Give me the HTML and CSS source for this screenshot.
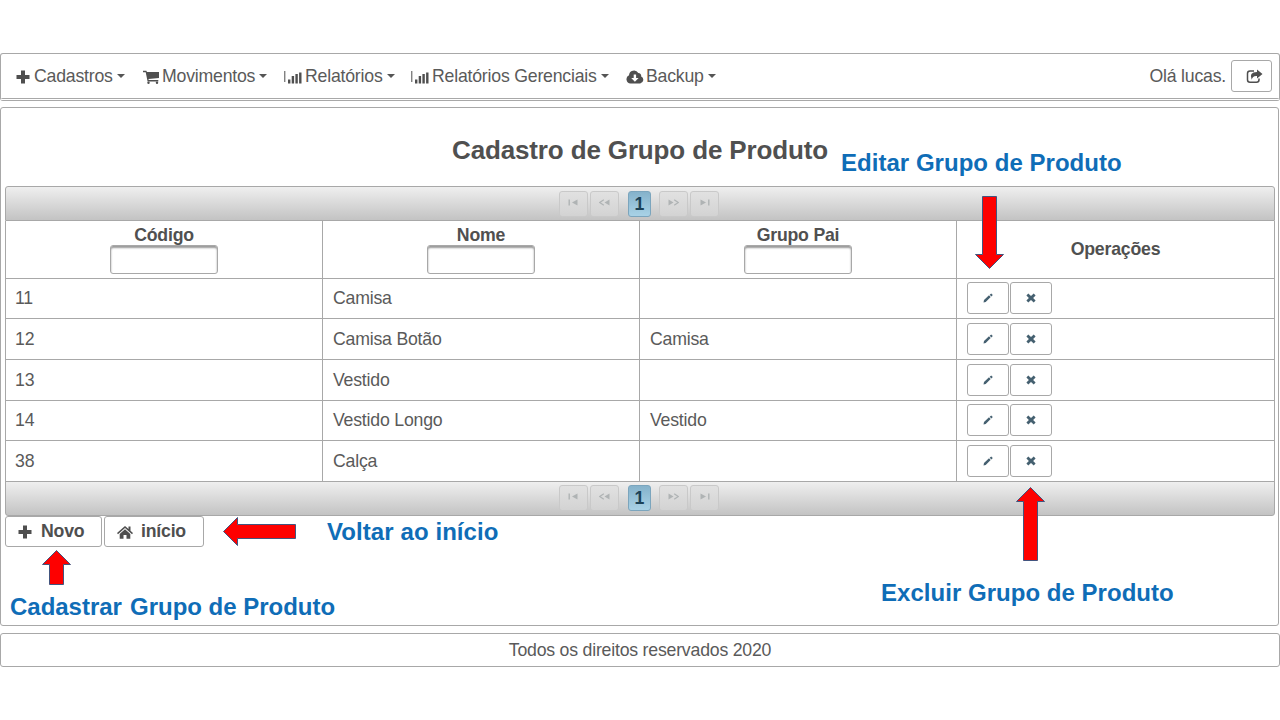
FILE: index.html
```html
<!DOCTYPE html>
<html lang="pt-BR">
<head>
<meta charset="utf-8">
<title>Cadastro de Grupo de Produto</title>
<link rel="stylesheet" href="styles.css">
</head>
<body>
<svg class="defs" width="0" height="0">
  <symbol id="plus" viewBox="0 0 14 14"><path d="M5 .5h4V5h4.500v4H9v4.500H5V9H.5V5H5z"/></symbol>
  <symbol id="cart" viewBox="0 0 16 14"><path d="M0 .7h3.400l.5 1.300H16v6l-10.500 1 .2 1H15.300V11.500H4.600L2.700 2.300H0z"/><circle cx="5.500" cy="12.700" r="1.200"/><circle cx="14" cy="12.700" r="1.200"/></symbol>
  <symbol id="chart" viewBox="0 0 18 14"><path d="M.3 1h1v11h-1zM4 9.500h2.400v4H4zM7.700 6h2.400v7.500H7.700zM11.400 7.500h2.400v6h-2.400zM11.400 4h2.400v9.500h-2.400zM15.100 2.500h2.400v11h-2.400z"/></symbol>
  <symbol id="cloud" viewBox="0 0 18 14"><path fill-rule="evenodd" d="M4.500 13.500A4.300 4.300 0 0 1 3 5.300 5 5 0 0 1 12.300 3a3 3 0 0 1 2.900 3.500 3.700 3.700 0 0 1-1 7zM7.700 4.500V8H5.200l3.700 3.800L12.600 8h-2.500V4.500z"/></symbol>
  <symbol id="share" viewBox="0 0 17 15"><path d="M8 2H4Q1.500 2 1.500 4.500v6.300q0 2.500 2.500 2.500h6.500q2.500 0 2.500-2.500V9.500" fill="none" stroke="currentColor" stroke-width="1.500"/><path d="M11 .5 16.500 5 11 9.500V7Q6.500 6.500 5.700 10.800 2.500 3 11 3z"/></symbol>
  <symbol id="home" viewBox="0 0 16 14"><path d="M8 1 0 8l1 1.200 7-6.100 7 6.100L16 8l-2.500-2.200V1.500h-2v2.500z"/><path d="M8 4.300 2.700 9v4.700H6.500V10h3v3.700h3.800V9z"/></symbol>
  <symbol id="pencil" viewBox="0 0 10 10"><path d="M.5 9.500 1 7l5-4.700L7.700 4l-5 5zM6.700 1.700 8.200.4 9.800 2 8.400 3.400z"/></symbol>
  <symbol id="cross" viewBox="0 0 10 10"><path d="M2.300.5 5 3 7.700.5 9.600 2.400 7.100 5l2.500 2.600-1.900 1.900L5 7 2.300 9.500.4 7.600 2.900 5 .4 2.400z"/></symbol>
  <symbol id="first" viewBox="0 0 10 7"><path d="M0 .5h1.400v6H0zM9 .5v6L3.500 3.500z"/></symbol>
  <symbol id="prev" viewBox="0 0 11 7"><path d="M4.800.8.8 3.500l4 2.700" fill="none" stroke="currentColor" stroke-width="1.200"/><path d="M10.500.5v6L5.500 3.500z"/></symbol>
  <symbol id="next" viewBox="0 0 11 7"><path d="m6.200.8 4 2.700-4 2.700" fill="none" stroke="currentColor" stroke-width="1.200"/><path d="M.5.500v6l5-3z"/></symbol>
  <symbol id="last" viewBox="0 0 10 7"><path d="M8.600.5H10v6H8.600zM1 .5v6l5.500-3z"/></symbol>
</svg>

<nav class="menubar">
  <div class="menu">
    <span class="item cadastros"><svg class="ico plus"><use href="#plus"/></svg>Cadastros<i class="caret"></i></span>
    <span class="item movimentos"><svg class="ico cart"><use href="#cart"/></svg>Movimentos<i class="caret"></i></span>
    <span class="item relatorios"><svg class="ico chart"><use href="#chart"/></svg>Relatórios<i class="caret"></i></span>
    <span class="item gerenciais"><svg class="ico chart"><use href="#chart"/></svg>Relatórios Gerenciais<i class="caret"></i></span>
    <span class="item backup"><svg class="ico cloud"><use href="#cloud"/></svg>Backup<i class="caret"></i></span>
  </div>
  <div class="user">Olá lucas.<button class="btn logout" aria-label="Sair"><svg><use href="#share"/></svg></button></div>
</nav>

<main class="panel">
  <h1>Cadastro de Grupo de Produto</h1>
  <div class="pager top">
    <span class="pg"><svg><use href="#first"/></svg></span><span class="pg"><svg><use href="#prev"/></svg></span><b class="current">1</b><span class="pg"><svg><use href="#next"/></svg></span><span class="pg"><svg><use href="#last"/></svg></span>
  </div>
  <table>
    <colgroup><col class="c1"><col class="c2"><col class="c3"><col class="c4"></colgroup>
    <thead><tr>
      <th>Código<input type="text" aria-label="Código"></th>
      <th>Nome<input type="text" aria-label="Nome"></th>
      <th>Grupo Pai<input type="text" aria-label="Grupo Pai"></th>
      <th>Operações</th>
    </tr></thead>
    <tbody>
      <tr><td>11</td><td>Camisa</td><td></td><td><div class="ops"><button class="btn"><svg><use href="#pencil"/></svg></button><button class="btn"><svg><use href="#cross"/></svg></button></div></td></tr>
      <tr class="tall"><td>12</td><td>Camisa Botão</td><td>Camisa</td><td><div class="ops"><button class="btn"><svg><use href="#pencil"/></svg></button><button class="btn"><svg><use href="#cross"/></svg></button></div></td></tr>
      <tr class="tall"><td>13</td><td>Vestido</td><td></td><td><div class="ops"><button class="btn"><svg><use href="#pencil"/></svg></button><button class="btn"><svg><use href="#cross"/></svg></button></div></td></tr>
      <tr><td>14</td><td>Vestido Longo</td><td>Vestido</td><td><div class="ops"><button class="btn"><svg><use href="#pencil"/></svg></button><button class="btn"><svg><use href="#cross"/></svg></button></div></td></tr>
      <tr class="tall"><td>38</td><td>Calça</td><td></td><td><div class="ops"><button class="btn"><svg><use href="#pencil"/></svg></button><button class="btn"><svg><use href="#cross"/></svg></button></div></td></tr>
    </tbody>
  </table>
  <div class="pager bottom">
    <span class="pg"><svg><use href="#first"/></svg></span><span class="pg"><svg><use href="#prev"/></svg></span><b class="current">1</b><span class="pg"><svg><use href="#next"/></svg></span><span class="pg"><svg><use href="#last"/></svg></span>
  </div>
  <div class="actions">
    <button class="btn novo"><svg class="ico plus"><use href="#plus"/></svg>Novo</button>
    <button class="btn inicio"><svg class="ico home"><use href="#home"/></svg>início</button>
  </div>
</main>

<footer>Todos os direitos reservados 2020</footer>

<div class="note edit">Editar Grupo de Produto</div>
<div class="note back">Voltar ao início</div>
<div class="note create">Cadastrar<span class="gap"> </span>Grupo de Produto</div>
<div class="note remove">Excluir Grupo de Produto</div>
<svg class="arrows" viewBox="0 0 1280 720">
  <path d="M982.500 196.500h14v58h7L989.500 268.500 975.500 254.500h7z"/>
  <path d="M1023.500 560.500h14v-59h7L1030.500 487.500 1016.500 501.500h7z"/>
  <path d="M295.500 524.500v14h-58v7L223.500 531.500 237.500 517.500v7z"/>
  <path d="M49.500 584.500h14v-20h7L56.500 550.500 42.500 564.500h7z"/>
</svg>
</body>
</html>
```
FILE: styles.css
```css
* { box-sizing: border-box; }
body {
  margin: 0;
  padding-top: 53px;
  width: 1280px;
  height: 720px;
  overflow: hidden;
  position: relative;
  background: #fff;
  color: #5a5a5a;
  font: 17.7px/20px "Liberation Sans", Arial, sans-serif;
  letter-spacing: -0.21px;
}
svg { fill: currentColor; display: block; flex: none; }
.defs { position: absolute; }
.menubar {
  height: 48px;
  border: 1px solid #a8a8a8;
  border-bottom: 3px double #a8a8a8;
  border-radius: 3px;
  display: flex;
  justify-content: space-between;
  align-items: center;
  padding: 0 7px 0 15px;
}
.menu, .item, .user { display: flex; align-items: center; }
.menu { margin-top: -1px; }
.item { white-space: nowrap; height: 20px; }
.cadastros { width: 127px; }
.movimentos { width: 141px; }
.relatorios { width: 127px; }
.gerenciais { width: 215px; }
.ico { color: #4f4f4f; margin-top: 2px; }
.item .plus { width: 14px; height: 14px; margin-right: 4px; }
.item .cart { width: 16px; height: 14px; margin-right: 3px; }
.item .chart { width: 18px; height: 14px; margin-right: 3px; }
.item .cloud { width: 18px; height: 14px; margin-right: 2px; }
.caret { border: 4px solid transparent; border-top-color: #555; border-bottom: 0; margin-left: 4px; }
.user { gap: 5px; }
.btn {
  border: 1px solid #a8a8a8;
  border-radius: 3px;
  background: #fff;
  color: #4f4f4f;
  padding: 0;
  display: flex;
  align-items: center;
  justify-content: center;
  font: inherit;
  letter-spacing: inherit;
}
.logout { width: 41px; height: 32px; padding-left: 6px; }
.logout svg { width: 17px; height: 15px; }
.panel {
  width: 1279px;
  height: 519px;
  margin-top: 6px;
  border: 1px solid #a8a8a8;
  border-radius: 3px;
  padding: 27px 3px 0 4px;
}
h1 { margin: 0 0 21px; font-size: 26px; line-height: 30px; text-align: center; letter-spacing: -0.14px; color: #505050; }
.pager {
  height: 35px;
  border: 1px solid #a8a8a8;
  background: linear-gradient(#efefef, #c3c3c3);
  display: flex;
  align-items: center;
  justify-content: center;
  padding-right: 2px;
}
.top { border-radius: 3px 3px 0 0; }
.bottom { border-radius: 0 0 3px 3px; margin-top: -1px; }
.pg {
  width: 29px;
  height: 26px;
  margin-right: 2px;
  border: 1px solid #c9c9c9;
  border-radius: 3px;
  background: linear-gradient(#e1e1e1, #d3d3d3);
  color: #afb3b4;
  display: flex;
  align-items: center;
  justify-content: center;
}
.pg:last-child { margin-right: 0; }
.pg svg { width: 11px; height: 7px; margin-bottom: 3px; }
.current {
  width: 23px;
  height: 26px;
  margin: 0 8px 0 7px;
  border: 1px solid #7ba5bd;
  border-radius: 3px;
  background: linear-gradient(#85b2cb, #a9d2e6);
  color: #1c4257;
  text-align: center;
  line-height: 24px;
  letter-spacing: 0;
}
table { width: 1270px; table-layout: fixed; border-collapse: collapse; }
.c1, .c2, .c3 { width: 317px; }
th, td { border: 1px solid #a8a8a8; text-align: left; }
thead th { border-top: 0; }
th { height: 57px; text-align: center; padding: 0; color: #505050; }
td { height: 40px; padding: 0 10px; }
td:first-child { padding-left: 9px; }
.tall td { height: 41px; }
input {
  display: block;
  width: 108px;
  height: 29px;
  margin: 0 auto;
  border: 1px solid #a8a8a8;
  border-radius: 3px;
  background: #fff;
  box-shadow: inset 0 2px 2px #999;
}
.ops { display: flex; gap: 1px; }
.ops .btn { width: 42px; height: 32px; color: #456070; }
.ops svg { width: 10px; height: 10px; }
.actions { display: flex; gap: 2px; }
.actions .btn { height: 31px; font-weight: bold; justify-content: flex-start; padding-left: 12px; }
.actions .novo { width: 97px; }
.actions .inicio { width: 100px; padding-left: 12px; }
.actions .plus { width: 14px; height: 14px; margin-right: 9px; }
.actions .home { width: 16px; height: 14px; margin-right: 8px; }
footer {
  height: 34px;
  margin-top: 7px;
  border: 1px solid #a8a8a8;
  border-radius: 3px;
  text-align: center;
  line-height: 33px;
}
.note { position: absolute; color: #0f6db7; font-weight: bold; font-size: 24px; line-height: 28px; white-space: nowrap; letter-spacing: 0.03px; }
.edit { left: 841px; top: 149px; }
.back { left: 327px; top: 518px; letter-spacing: 0.08px; }
.create { left: 10px; top: 593px; letter-spacing: -0.02px; }
.create .gap { letter-spacing: 1.500px; }
.remove { left: 881px; top: 579px; }
.arrows { position: absolute; left: 0; top: 0; width: 1280px; height: 720px; fill: #fe0000; stroke: #42557f; pointer-events: none; }
```
